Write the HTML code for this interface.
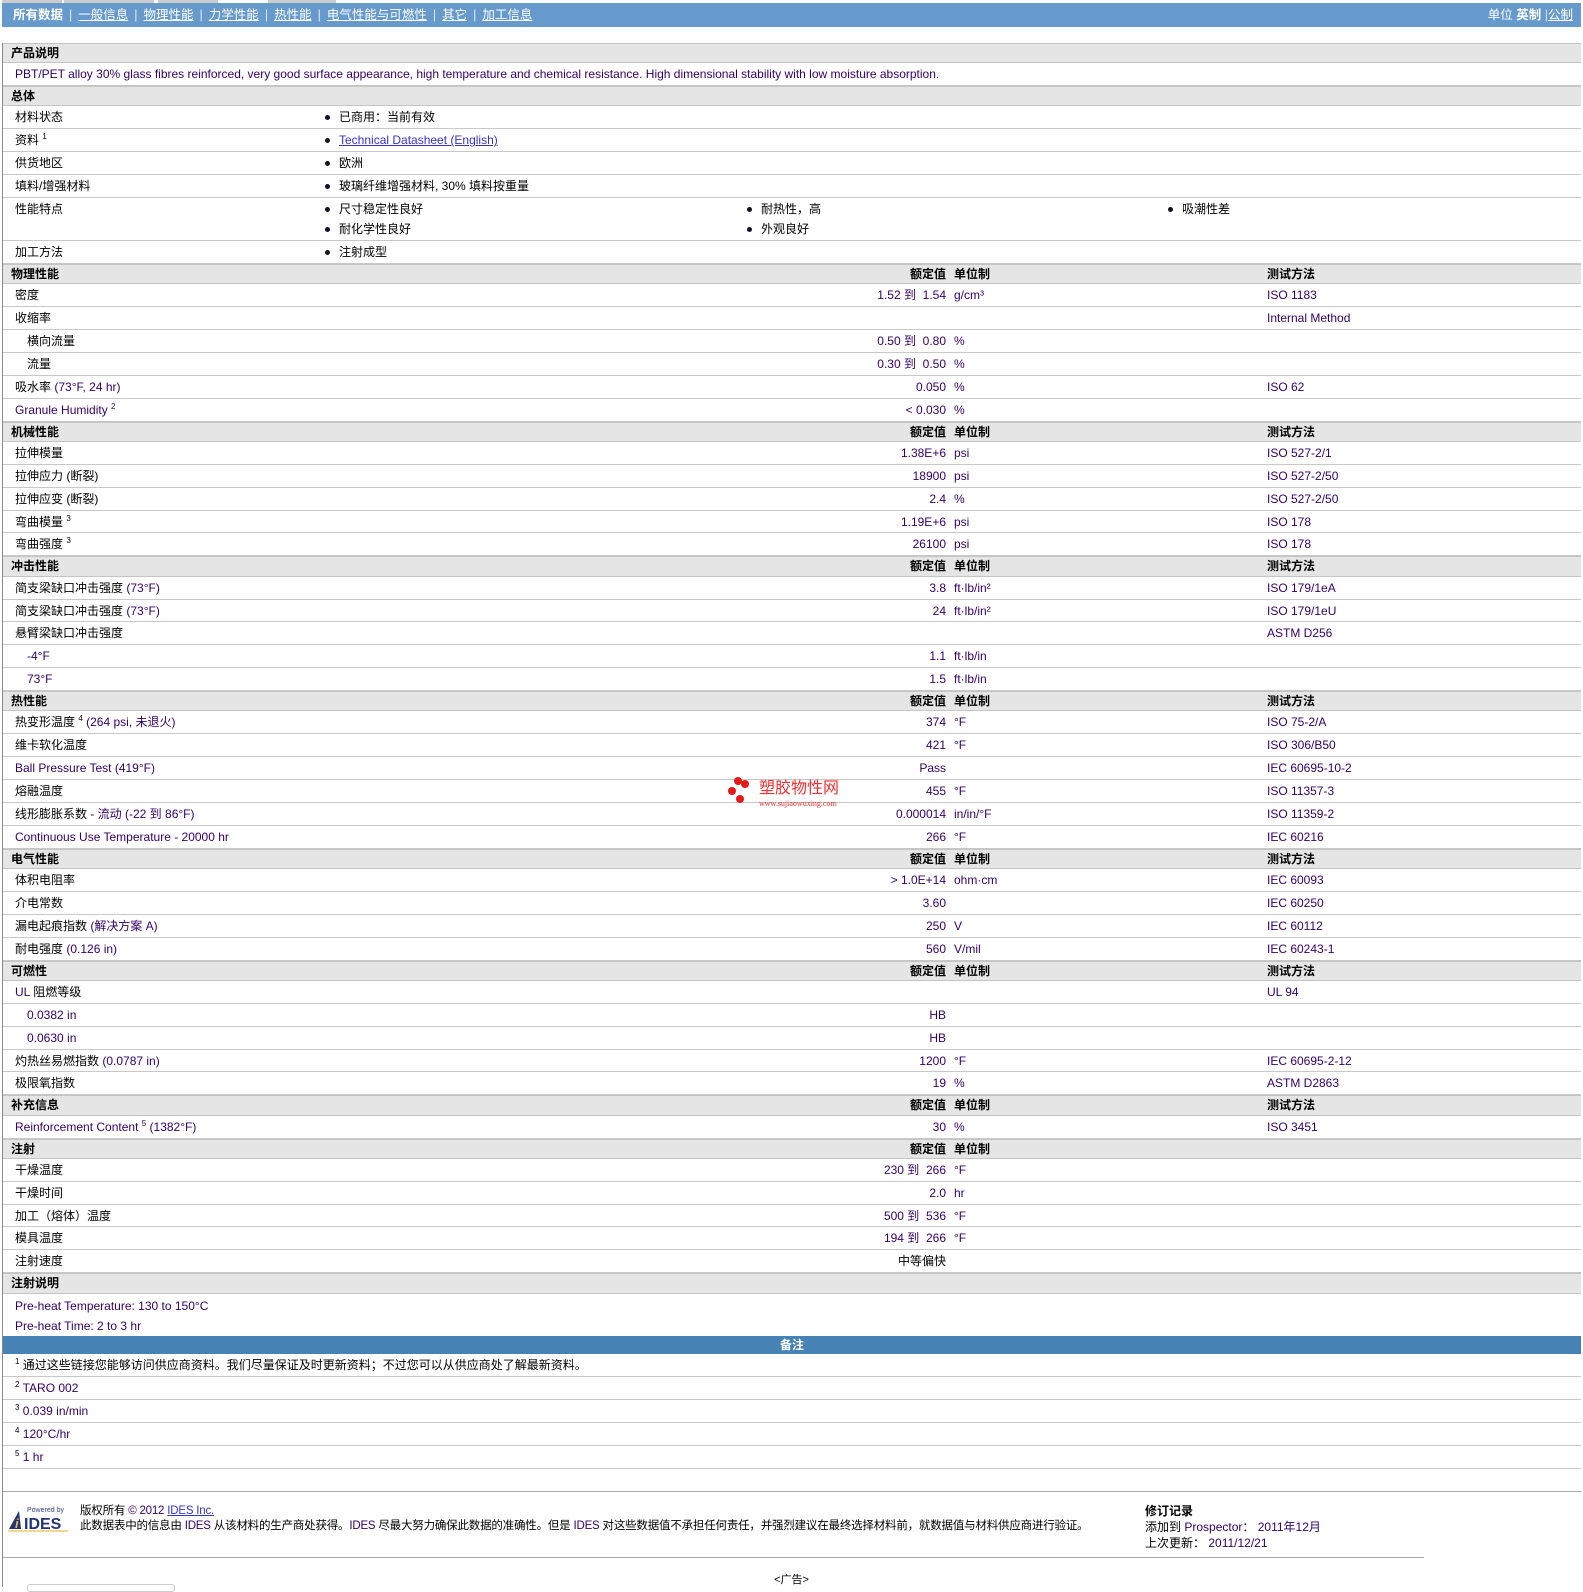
<!DOCTYPE html>
<html><head><meta charset="utf-8">
<style>
*{margin:0;padding:0;box-sizing:border-box}
body{width:1583px;height:1589px;background:#fff;font-family:"Liberation Sans","Noto Sans CJK SC",sans-serif;font-size:12px;color:#000;position:relative;overflow:hidden}
.nav{position:absolute;left:2px;top:3px;width:1579px;height:24px;background:#6699cc;color:#fff;font-size:12.5px;line-height:24px}
.nav a{color:#fff;text-decoration:underline}
.nav .s{margin:0 6px;opacity:.8}
.tabs{position:absolute;top:0;height:3px;background:#ccc}
#c{position:absolute;left:2px;top:43px;width:1579px;border-left:1px solid #888}
.r{position:relative;height:22.9px;border-bottom:1px solid #c8c8c8;line-height:22px}
.h{position:relative;height:20.3px;background:#e5e5e5;border-top:1px solid #c4c4c4;border-bottom:1px solid #c4c4c4;font-weight:bold;font-size:12px;line-height:18px}
.h .t{position:absolute;left:8px}
.h .a{position:absolute;right:calc(1579px - 944px);}
.h .b{position:absolute;left:951px}
.h .m{position:absolute;left:1264px}
.l{position:absolute;left:12px;white-space:nowrap}
.l2{position:absolute;left:24px;white-space:nowrap}
.p{color:#330066}
.v{position:absolute;right:calc(1579px - 944px);color:#330066;white-space:nowrap}
.u{position:absolute;left:951px;color:#330066;white-space:nowrap}
.m{position:absolute;left:1264px;color:#330066;white-space:nowrap}
.bl{position:absolute;white-space:nowrap}
.bl:before{content:"";position:absolute;left:-14px;top:9px;width:5px;height:5px;border-radius:50%;background:#112}
sup{font-size:8px;vertical-align:baseline;position:relative;top:-5px;line-height:0}
.lk{color:#3333cc;text-decoration:underline}
</style></head><body>
<div class="tabs" style="left:2px;width:60px"></div><div class="tabs" style="left:64px;width:90px"></div><div class="tabs" style="left:158px;width:60px"></div><div class="tabs" style="left:268px;width:68px"></div>
<div class="nav"><span style="position:absolute;left:11px"><b>所有数据</b><span class="s">|</span><a>一般信息</a><span class="s">|</span><a>物理性能</a><span class="s">|</span><a>力学性能</a><span class="s">|</span><a>热性能</a><span class="s">|</span><a>电气性能与可燃性</a><span class="s">|</span><a>其它</a><span class="s">|</span><a>加工信息</a></span>
<span style="position:absolute;right:8px">单位 <b>英制</b> <span style="opacity:.7">|</span><a>公制</a></span></div>
<div id="c">
<div class="h"><span class="t">产品说明</span></div>
<div class="r"><span class="l p">PBT/PET alloy 30% glass fibres reinforced, very good surface appearance, high temperature and chemical resistance. High dimensional stability with low moisture absorption.</span></div>
<div class="h"><span class="t">总体</span></div>
<div class="r"><span class="l">材料状态</span><span class="bl" style="left:336px">已商用：当前有效</span></div>
<div class="r"><span class="l">资料 <sup>1</sup></span><span class="bl lk" style="left:336px">Technical Datasheet (English)</span></div>
<div class="r"><span class="l">供货地区</span><span class="bl" style="left:336px">欧洲</span></div>
<div class="r"><span class="l">填料/增强材料</span><span class="bl" style="left:336px">玻璃纤维增强材料, 30% 填料按重量</span></div>
<div class="r" style="height:43px"><span class="l" style="top:0">性能特点</span>
<span class="bl" style="left:336px;top:0">尺寸稳定性良好</span><span class="bl" style="left:336px;top:20px">耐化学性良好</span>
<span class="bl" style="left:758px;top:0">耐热性，高</span><span class="bl" style="left:758px;top:20px">外观良好</span>
<span class="bl" style="left:1179px;top:0">吸潮性差</span></div>
<div class="r"><span class="l">加工方法</span><span class="bl" style="left:336px">注射成型</span></div>

<div class="h"><span class="t">物理性能</span><span class="a">额定值</span><span class="b">单位制</span><span class="m" style="color:#000">测试方法</span></div>
<div class="r"><span class="l">密度</span><span class="v">1.52 到 &nbsp;1.54</span><span class="u">g/cm³</span><span class="m">ISO 1183</span></div>
<div class="r"><span class="l">收缩率</span><span class="m">Internal Method</span></div>
<div class="r"><span class="l2">横向流量</span><span class="v">0.50 到 &nbsp;0.80</span><span class="u">%</span></div>
<div class="r"><span class="l2">流量</span><span class="v">0.30 到 &nbsp;0.50</span><span class="u">%</span></div>
<div class="r"><span class="l">吸水率 <span class="p">(73°F, 24 hr)</span></span><span class="v">0.050</span><span class="u">%</span><span class="m">ISO 62</span></div>
<div class="r"><span class="l p">Granule Humidity <sup>2</sup></span><span class="v">&lt; 0.030</span><span class="u">%</span></div>

<div class="h"><span class="t">机械性能</span><span class="a">额定值</span><span class="b">单位制</span><span class="m" style="color:#000">测试方法</span></div>
<div class="r"><span class="l">拉伸模量</span><span class="v">1.38E+6</span><span class="u">psi</span><span class="m">ISO 527-2/1</span></div>
<div class="r"><span class="l">拉伸应力 (断裂)</span><span class="v">18900</span><span class="u">psi</span><span class="m">ISO 527-2/50</span></div>
<div class="r"><span class="l">拉伸应变 (断裂)</span><span class="v">2.4</span><span class="u">%</span><span class="m">ISO 527-2/50</span></div>
<div class="r"><span class="l">弯曲模量 <sup>3</sup></span><span class="v">1.19E+6</span><span class="u">psi</span><span class="m">ISO 178</span></div>
<div class="r"><span class="l">弯曲强度 <sup>3</sup></span><span class="v">26100</span><span class="u">psi</span><span class="m">ISO 178</span></div>

<div class="h"><span class="t">冲击性能</span><span class="a">额定值</span><span class="b">单位制</span><span class="m" style="color:#000">测试方法</span></div>
<div class="r"><span class="l">简支梁缺口冲击强度 <span class="p">(73°F)</span></span><span class="v">3.8</span><span class="u">ft·lb/in²</span><span class="m">ISO 179/1eA</span></div>
<div class="r"><span class="l">简支梁缺口冲击强度 <span class="p">(73°F)</span></span><span class="v">24</span><span class="u">ft·lb/in²</span><span class="m">ISO 179/1eU</span></div>
<div class="r"><span class="l">悬臂梁缺口冲击强度</span><span class="m">ASTM D256</span></div>
<div class="r"><span class="l2 p">-4°F</span><span class="v">1.1</span><span class="u">ft·lb/in</span></div>
<div class="r"><span class="l2 p">73°F</span><span class="v">1.5</span><span class="u">ft·lb/in</span></div>

<div class="h"><span class="t">热性能</span><span class="a">额定值</span><span class="b">单位制</span><span class="m" style="color:#000">测试方法</span></div>
<div class="r"><span class="l">热变形温度 <sup>4</sup> <span class="p">(264 psi, 未退火)</span></span><span class="v">374</span><span class="u">°F</span><span class="m">ISO 75-2/A</span></div>
<div class="r"><span class="l">维卡软化温度</span><span class="v">421</span><span class="u">°F</span><span class="m">ISO 306/B50</span></div>
<div class="r"><span class="l p">Ball Pressure Test (419°F)</span><span class="v">Pass</span><span class="m">IEC 60695-10-2</span></div>
<div class="r"><span class="l">熔融温度</span><span class="v">455</span><span class="u">°F</span><span class="m">ISO 11357-3</span></div>
<div class="r"><span class="l">线形膨胀系数 <span class="p">- 流动 (-22 到 86°F)</span></span><span class="v">0.000014</span><span class="u">in/in/°F</span><span class="m">ISO 11359-2</span></div>
<div class="r"><span class="l p">Continuous Use Temperature - 20000 hr</span><span class="v">266</span><span class="u">°F</span><span class="m">IEC 60216</span></div>

<div class="h"><span class="t">电气性能</span><span class="a">额定值</span><span class="b">单位制</span><span class="m" style="color:#000">测试方法</span></div>
<div class="r"><span class="l">体积电阻率</span><span class="v">&gt; 1.0E+14</span><span class="u">ohm·cm</span><span class="m">IEC 60093</span></div>
<div class="r"><span class="l">介电常数</span><span class="v">3.60</span><span class="m">IEC 60250</span></div>
<div class="r"><span class="l">漏电起痕指数 <span class="p">(解决方案 A)</span></span><span class="v">250</span><span class="u">V</span><span class="m">IEC 60112</span></div>
<div class="r"><span class="l">耐电强度 <span class="p">(0.126 in)</span></span><span class="v">560</span><span class="u">V/mil</span><span class="m">IEC 60243-1</span></div>

<div class="h"><span class="t">可燃性</span><span class="a">额定值</span><span class="b">单位制</span><span class="m" style="color:#000">测试方法</span></div>
<div class="r"><span class="l"><span class="p">UL</span> 阻燃等级</span><span class="m">UL 94</span></div>
<div class="r"><span class="l2 p">0.0382 in</span><span class="v">HB</span></div>
<div class="r"><span class="l2 p">0.0630 in</span><span class="v">HB</span></div>
<div class="r"><span class="l">灼热丝易燃指数 <span class="p">(0.0787 in)</span></span><span class="v">1200</span><span class="u">°F</span><span class="m">IEC 60695-2-12</span></div>
<div class="r"><span class="l">极限氧指数</span><span class="v">19</span><span class="u">%</span><span class="m">ASTM D2863</span></div>

<div class="h"><span class="t">补充信息</span><span class="a">额定值</span><span class="b">单位制</span><span class="m" style="color:#000">测试方法</span></div>
<div class="r"><span class="l p">Reinforcement Content <sup>5</sup> (1382°F)</span><span class="v">30</span><span class="u">%</span><span class="m">ISO 3451</span></div>

<div class="h"><span class="t">注射</span><span class="a">额定值</span><span class="b">单位制</span></div>
<div class="r"><span class="l">干燥温度</span><span class="v">230 到 &nbsp;266</span><span class="u">°F</span></div>
<div class="r"><span class="l">干燥时间</span><span class="v">2.0</span><span class="u">hr</span></div>
<div class="r"><span class="l">加工（熔体）温度</span><span class="v">500 到 &nbsp;536</span><span class="u">°F</span></div>
<div class="r"><span class="l">模具温度</span><span class="v">194 到 &nbsp;266</span><span class="u">°F</span></div>
<div class="r"><span class="l">注射速度</span><span class="v" style="color:#000">中等偏快</span></div>

<div class="h"><span class="t">注射说明</span></div>
<div style="position:relative;height:42.7px"><span class="l p" style="top:2px;line-height:20px">Pre-heat Temperature: 130 to 150°C<br>Pre-heat Time: 2 to 3 hr</span></div>
<div style="height:18px;background:#4682b4;color:#fff;font-weight:bold;font-size:12px;text-align:center;line-height:18px">备注</div>
<div class="r" style="height:23px"><span class="l"><sup>1</sup> 通过这些链接您能够访问供应商资料。我们尽量保证及时更新资料；不过您可以从供应商处了解最新资料。</span></div>
<div class="r" style="height:23px"><span class="l"><sup>2</sup> <span class="p">TARO 002</span></span></div>
<div class="r" style="height:23px"><span class="l"><sup>3</sup> <span class="p">0.039 in/min</span></span></div>
<div class="r" style="height:23px"><span class="l"><sup>4</sup> <span class="p">120°C/hr</span></span></div>
<div class="r" style="height:23px"><span class="l"><sup>5</sup> <span class="p">1 hr</span></span></div>
<div style="height:23px;border-bottom:1px solid #aaa"></div>
<div style="height:66px;position:relative;border-bottom:1px solid #aaa;width:1421px"></div>
<div style="height:29px"></div>
</div>

<svg style="position:absolute;left:7px;top:1505px" width="62" height="28" viewBox="0 0 62 28">
<text x="20" y="7" font-family="Liberation Sans" font-size="7" fill="#334488">Powered by</text>
<polygon points="2,24 12,6 14,24" fill="#223377"/>
<text x="8" y="23" font-family="Liberation Sans" font-size="13" font-weight="bold" font-style="italic" fill="#e8c040">i</text>
<text x="17" y="24" font-family="Liberation Sans" font-size="16" font-weight="bold" fill="#223377">IDES</text>
<rect x="1" y="25" width="60" height="2" fill="#f0d890"/>
</svg>
<div style="position:absolute;left:80px;top:1504px;line-height:15px;font-size:11.5px;letter-spacing:-0.2px;white-space:nowrap">版权所有 <span class="p">© 2012</span> <span class="lk">IDES Inc.</span><br>此数据表中的信息由 <span class="p">IDES</span> 从该材料的生产商处获得。<span class="p">IDES</span> 尽最大努力确保此数据的准确性。但是 <span class="p">IDES</span> 对这些数据值不承担任何责任，并强烈建议在最终选择材料前，就数据值与材料供应商进行验证。</div>
<div style="position:absolute;left:1145px;top:1503px;line-height:16px;font-size:12px"><b>修订记录</b><br>添加到 <span class="p">Prospector</span>： <span class="p">2011年12月</span><br>上次更新： <span class="p">2011/12/21</span></div>
<div style="position:absolute;left:0;width:1583px;top:1571px;text-align:center;font-size:11px">&lt;广告&gt;</div>
<div style="position:absolute;left:27px;top:1584px;width:148px;height:8px;border:1px solid #ccc;border-radius:3px"></div>

<div style="position:absolute;left:728px;top:777px;width:20px;height:30px">
<div style="position:absolute;left:6px;top:0;width:8px;height:8px;border-radius:50%;background:#e81818"></div>
<div style="position:absolute;left:13px;top:3px;width:8px;height:8px;border-radius:50%;background:#e81818"></div>
<div style="position:absolute;left:0;top:10px;width:8px;height:8px;border-radius:50%;background:#e81818"></div>
<div style="position:absolute;left:8px;top:18px;width:8px;height:8px;border-radius:50%;background:#e81818"></div>
</div>
<div style="position:absolute;left:759px;top:780px;color:#ee3030;font-size:16px;line-height:18px">塑胶物性网</div>
<div style="position:absolute;left:759px;top:799px;color:#ee3030;font-size:8px;font-family:'Liberation Serif',serif">www.sujiaowuxing.com</div>
</body></html>
